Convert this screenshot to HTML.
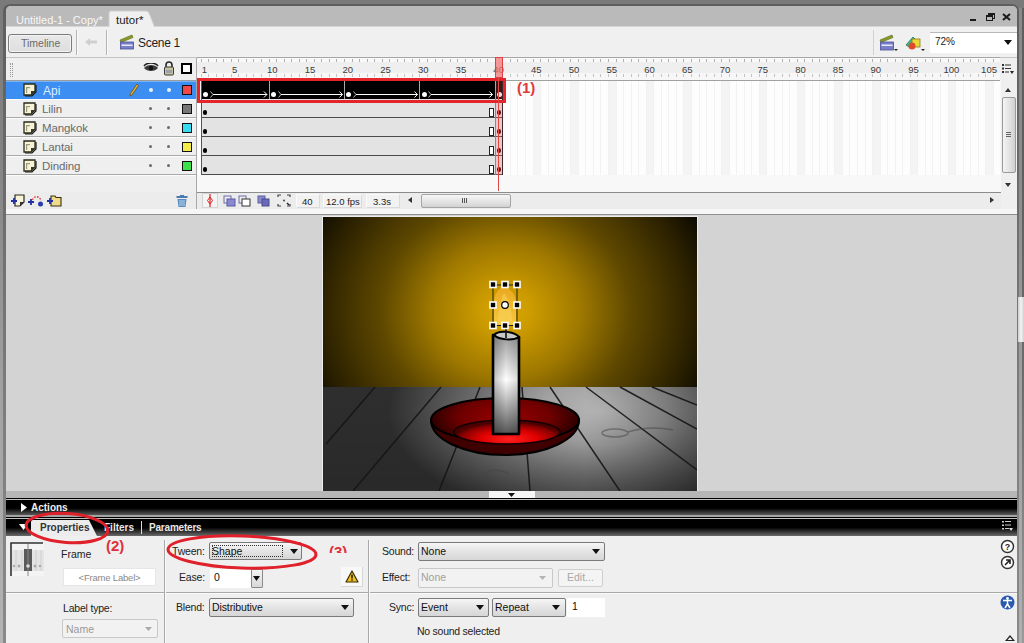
<!DOCTYPE html>
<html><head><meta charset="utf-8">
<style>
*{margin:0;padding:0;box-sizing:border-box}
html,body{width:1024px;height:643px;overflow:hidden;background:linear-gradient(#7a7a7a,#848484 25%,#a2a2a2 62%,#b4b4b4);font-family:"Liberation Sans",sans-serif;font-size:11px;color:#222;position:relative}
.a{position:absolute}
.t{position:absolute;white-space:nowrap;line-height:1}
.num{font-size:9.5px;color:#3a3a3a}
.ln{font-size:11.5px;color:#6a6a6a;letter-spacing:-0.1px}
</style></head><body>
<!-- window frame -->
<div class="a" style="left:3px;top:4px;width:1016px;height:639px;background:linear-gradient(#5e5e5e,#6a6a6a 25%,#7c7c7c 62%,#8a8a8a);border-radius:7px 7px 0 0"></div>
<div class="a" style="left:1019px;top:8px;width:3px;height:635px;background:linear-gradient(#8a8a8a,#8c8c8c 25%,#a0a0a0 62%,#b0b0b0)"></div>
<div class="a" style="left:1022px;top:8px;width:2px;height:635px;background:linear-gradient(#5e5e5e,#5e5e5e 25%,#6e6e6e 62%,#9a9a9a)"></div>
<div class="a" style="left:6px;top:6px;width:1011px;height:637px;background:#efefef;border-radius:5px 5px 0 0;overflow:hidden">
  <div class="a" style="left:0;top:0;width:1011px;height:20px;background:#bababa"></div>
  <div class="a" style="left:0;top:20px;width:1011px;height:1px;background:#d6d6d6"></div>
</div>
<!-- TABS -->
<div class="t" style="left:16px;top:15px;font-size:11px;color:#f8f8f8">Untitled-1 - Copy*</div>
<svg class="a" style="left:108px;top:10px" width="48" height="18"><path d="M1 18V3Q1 1 3 1H38Q40 1 41 3L47 18Z" fill="#f0f0f0" stroke="#cfcfcf" stroke-width="1"/></svg>
<div class="t" style="left:116px;top:15px;font-size:11.5px;color:#1a1a1a">tutor*</div>
<!-- window buttons -->
<div class="a" style="left:970px;top:19px;width:6px;height:2px;background:#1a1a1a"></div>
<div class="a" style="left:988px;top:13px;width:7px;height:6px;border:1px solid #1a1a1a;border-top-width:2px"></div>
<div class="a" style="left:986px;top:15px;width:7px;height:6px;border:1px solid #1a1a1a;border-top-width:2px;background:#bababa"></div>
<svg class="a" style="left:1002px;top:13px" width="9" height="8"><path d="M1 1L8 7M8 1L1 7" stroke="#1a1a1a" stroke-width="2"/></svg>

<!-- TOOLBAR y27-57 -->
<div class="a" style="left:6px;top:27px;width:1011px;height:30px;background:#f0f0f0"></div>
<div class="a" style="left:6px;top:57px;width:1011px;height:1px;background:#c4c4c4"></div>
<div class="a" style="left:8px;top:34px;width:64px;height:19px;border:1.5px solid #7c7c7c;border-radius:3px;background:linear-gradient(#e8e8e8,#dedede);box-shadow:inset 0 0 0 1px #f4f4f4"></div>
<div class="t" style="left:21px;top:38px;font-size:10.5px;color:#6a6a6a">Timeline</div>
<div class="a" style="left:76px;top:30px;width:1px;height:25px;background:#b4b4b4;box-shadow:1px 0 0 #fafafa"></div>
<svg class="a" style="left:84px;top:37px" width="14" height="10"><path d="M1 5L6 1V3.5H13V6.5H6V9Z" fill="#cfcfcf"/></svg>
<div class="a" style="left:106px;top:30px;width:1px;height:25px;background:#b4b4b4;box-shadow:1px 0 0 #fafafa"></div>
<!-- scene icon -->
<svg class="a" style="left:119px;top:34px" width="16" height="16">
 <path d="M1 6L13 1L14 3.5L2 8.5Z" fill="#8a9a2a" stroke="#5d6a10" stroke-width="0.6"/>
 <rect x="1.5" y="8" width="13" height="7" fill="#7a80c8" stroke="#4b4f9a" stroke-width="0.8"/>
 <rect x="2.5" y="10.5" width="11" height="1.5" fill="#e8e8f8"/>
</svg>
<div class="t" style="left:138px;top:37px;font-size:12px;letter-spacing:-0.3px;color:#1e1e1e">Scene 1</div>
<div class="a" style="left:873px;top:30px;width:1px;height:25px;background:#d0d0d0"></div>
<!-- edit scene icon -->
<svg class="a" style="left:879px;top:34px" width="20" height="18">
 <path d="M1 6L13 1L14 3.5L2 8.5Z" fill="#8a9a2a" stroke="#5d6a10" stroke-width="0.6"/>
 <rect x="1.5" y="8" width="13" height="8" fill="#7a80c8" stroke="#4b4f9a" stroke-width="0.8"/>
 <rect x="2.5" y="10.5" width="11" height="1.5" fill="#e8e8f8"/>
 <path d="M15 15h4l-2 2z" fill="#222"/>
</svg>
<svg class="a" style="left:904px;top:34px" width="22" height="18">
 <path d="M2 11L9 3L12 6L5 13Z" fill="#3fb88a" stroke="#1f7a5a" stroke-width="0.8"/>
 <rect x="8" y="5" width="8" height="8" fill="#e8d83a" stroke="#8a7a10" stroke-width="0.8"/>
 <circle cx="8" cy="12" r="3.5" fill="#e04a2a"/>
 <path d="M17 15h4l-2 2z" fill="#222"/>
</svg>
<div class="a" style="left:930px;top:32px;width:87px;height:21px;background:#fff;border-top:1px solid #b8b8b8"></div>
<div class="t" style="left:935px;top:37px;font-size:10px;color:#222">72%</div>
<svg class="a" style="left:1004px;top:40px" width="8" height="5"><path d="M0 0H8L4 5Z" fill="#111"/></svg>


<!-- TIMELINE PANEL y58-214 -->
<div class="a" style="left:6px;top:58px;width:1011px;height:156px;background:#efefef"></div>
<!-- header row -->
<div class="a" style="left:10px;top:63px;width:1px;height:14px;border-left:1px dotted #9a9a9a"></div>
<div class="a" style="left:12px;top:63px;width:1px;height:14px;border-left:1px dotted #9a9a9a"></div>
<!-- eye -->
<svg class="a" style="left:143px;top:63px" width="16" height="11">
 <path d="M1 5C4 1 12 1 15 5C12 9 4 9 1 5Z" fill="#3a3a3a"/>
 <path d="M1 3C4 -1 12 -1 15 3" stroke="#222" stroke-width="1.5" fill="none"/>
 <circle cx="8" cy="5" r="2.2" fill="#111"/>
</svg>
<!-- lock -->
<svg class="a" style="left:163px;top:61px" width="12" height="15">
 <path d="M3 6V4A3 3 0 0 1 9 4V6" stroke="#2a2a2a" stroke-width="1.6" fill="none"/>
 <rect x="1.5" y="6" width="9" height="8" rx="1" fill="#c8c49a" stroke="#3a3a3a" stroke-width="1"/>
 <rect x="3" y="9" width="6" height="3" fill="#9aa0b0"/>
</svg>
<!-- outline square -->
<div class="a" style="left:181px;top:63px;width:11px;height:11px;border:2px solid #000;background:#fff"></div>
<div class="a" style="left:196px;top:58px;width:1px;height:156px;background:#a8a8a8"></div>
<!-- ruler -->
<div class="a" style="left:197px;top:57px;width:803px;height:1px;background:#a6a6a6"></div>
<div class="a" style="left:197px;top:58px;width:803px;height:4px;background:#f8f8f8"></div>
<div class="a" style="left:197px;top:73px;width:803px;height:7px;background:#f7f7f7"></div>
<div class="a" style="left:197px;top:80px;width:803px;height:1px;background:#a0a0a0"></div>
<div class="a" style="left:200.60px;top:59px;width:1px;height:3px;background:#b0b0b0"></div>
<div class="a" style="left:200.60px;top:74px;width:1px;height:3px;background:#c4c4c4"></div>
<div class="a" style="left:208.14px;top:59px;width:1px;height:3px;background:#b0b0b0"></div>
<div class="a" style="left:208.14px;top:74px;width:1px;height:3px;background:#c4c4c4"></div>
<div class="a" style="left:215.69px;top:59px;width:1px;height:3px;background:#b0b0b0"></div>
<div class="a" style="left:215.69px;top:74px;width:1px;height:3px;background:#c4c4c4"></div>
<div class="a" style="left:223.23px;top:59px;width:1px;height:3px;background:#b0b0b0"></div>
<div class="a" style="left:223.23px;top:74px;width:1px;height:3px;background:#c4c4c4"></div>
<div class="a" style="left:230.78px;top:59px;width:1px;height:3px;background:#b0b0b0"></div>
<div class="a" style="left:230.78px;top:74px;width:1px;height:3px;background:#c4c4c4"></div>
<div class="a" style="left:238.32px;top:59px;width:1px;height:3px;background:#b0b0b0"></div>
<div class="a" style="left:238.32px;top:74px;width:1px;height:3px;background:#c4c4c4"></div>
<div class="a" style="left:245.87px;top:59px;width:1px;height:3px;background:#b0b0b0"></div>
<div class="a" style="left:245.87px;top:74px;width:1px;height:3px;background:#c4c4c4"></div>
<div class="a" style="left:253.41px;top:59px;width:1px;height:3px;background:#b0b0b0"></div>
<div class="a" style="left:253.41px;top:74px;width:1px;height:3px;background:#c4c4c4"></div>
<div class="a" style="left:260.96px;top:59px;width:1px;height:3px;background:#b0b0b0"></div>
<div class="a" style="left:260.96px;top:74px;width:1px;height:3px;background:#c4c4c4"></div>
<div class="a" style="left:268.50px;top:59px;width:1px;height:3px;background:#b0b0b0"></div>
<div class="a" style="left:268.50px;top:74px;width:1px;height:3px;background:#c4c4c4"></div>
<div class="a" style="left:276.05px;top:59px;width:1px;height:3px;background:#b0b0b0"></div>
<div class="a" style="left:276.05px;top:74px;width:1px;height:3px;background:#c4c4c4"></div>
<div class="a" style="left:283.60px;top:59px;width:1px;height:3px;background:#b0b0b0"></div>
<div class="a" style="left:283.60px;top:74px;width:1px;height:3px;background:#c4c4c4"></div>
<div class="a" style="left:291.14px;top:59px;width:1px;height:3px;background:#b0b0b0"></div>
<div class="a" style="left:291.14px;top:74px;width:1px;height:3px;background:#c4c4c4"></div>
<div class="a" style="left:298.69px;top:59px;width:1px;height:3px;background:#b0b0b0"></div>
<div class="a" style="left:298.69px;top:74px;width:1px;height:3px;background:#c4c4c4"></div>
<div class="a" style="left:306.23px;top:59px;width:1px;height:3px;background:#b0b0b0"></div>
<div class="a" style="left:306.23px;top:74px;width:1px;height:3px;background:#c4c4c4"></div>
<div class="a" style="left:313.77px;top:59px;width:1px;height:3px;background:#b0b0b0"></div>
<div class="a" style="left:313.77px;top:74px;width:1px;height:3px;background:#c4c4c4"></div>
<div class="a" style="left:321.32px;top:59px;width:1px;height:3px;background:#b0b0b0"></div>
<div class="a" style="left:321.32px;top:74px;width:1px;height:3px;background:#c4c4c4"></div>
<div class="a" style="left:328.87px;top:59px;width:1px;height:3px;background:#b0b0b0"></div>
<div class="a" style="left:328.87px;top:74px;width:1px;height:3px;background:#c4c4c4"></div>
<div class="a" style="left:336.41px;top:59px;width:1px;height:3px;background:#b0b0b0"></div>
<div class="a" style="left:336.41px;top:74px;width:1px;height:3px;background:#c4c4c4"></div>
<div class="a" style="left:343.95px;top:59px;width:1px;height:3px;background:#b0b0b0"></div>
<div class="a" style="left:343.95px;top:74px;width:1px;height:3px;background:#c4c4c4"></div>
<div class="a" style="left:351.50px;top:59px;width:1px;height:3px;background:#b0b0b0"></div>
<div class="a" style="left:351.50px;top:74px;width:1px;height:3px;background:#c4c4c4"></div>
<div class="a" style="left:359.04px;top:59px;width:1px;height:3px;background:#b0b0b0"></div>
<div class="a" style="left:359.04px;top:74px;width:1px;height:3px;background:#c4c4c4"></div>
<div class="a" style="left:366.59px;top:59px;width:1px;height:3px;background:#b0b0b0"></div>
<div class="a" style="left:366.59px;top:74px;width:1px;height:3px;background:#c4c4c4"></div>
<div class="a" style="left:374.13px;top:59px;width:1px;height:3px;background:#b0b0b0"></div>
<div class="a" style="left:374.13px;top:74px;width:1px;height:3px;background:#c4c4c4"></div>
<div class="a" style="left:381.68px;top:59px;width:1px;height:3px;background:#b0b0b0"></div>
<div class="a" style="left:381.68px;top:74px;width:1px;height:3px;background:#c4c4c4"></div>
<div class="a" style="left:389.23px;top:59px;width:1px;height:3px;background:#b0b0b0"></div>
<div class="a" style="left:389.23px;top:74px;width:1px;height:3px;background:#c4c4c4"></div>
<div class="a" style="left:396.77px;top:59px;width:1px;height:3px;background:#b0b0b0"></div>
<div class="a" style="left:396.77px;top:74px;width:1px;height:3px;background:#c4c4c4"></div>
<div class="a" style="left:404.31px;top:59px;width:1px;height:3px;background:#b0b0b0"></div>
<div class="a" style="left:404.31px;top:74px;width:1px;height:3px;background:#c4c4c4"></div>
<div class="a" style="left:411.86px;top:59px;width:1px;height:3px;background:#b0b0b0"></div>
<div class="a" style="left:411.86px;top:74px;width:1px;height:3px;background:#c4c4c4"></div>
<div class="a" style="left:419.40px;top:59px;width:1px;height:3px;background:#b0b0b0"></div>
<div class="a" style="left:419.40px;top:74px;width:1px;height:3px;background:#c4c4c4"></div>
<div class="a" style="left:426.95px;top:59px;width:1px;height:3px;background:#b0b0b0"></div>
<div class="a" style="left:426.95px;top:74px;width:1px;height:3px;background:#c4c4c4"></div>
<div class="a" style="left:434.50px;top:59px;width:1px;height:3px;background:#b0b0b0"></div>
<div class="a" style="left:434.50px;top:74px;width:1px;height:3px;background:#c4c4c4"></div>
<div class="a" style="left:442.04px;top:59px;width:1px;height:3px;background:#b0b0b0"></div>
<div class="a" style="left:442.04px;top:74px;width:1px;height:3px;background:#c4c4c4"></div>
<div class="a" style="left:449.58px;top:59px;width:1px;height:3px;background:#b0b0b0"></div>
<div class="a" style="left:449.58px;top:74px;width:1px;height:3px;background:#c4c4c4"></div>
<div class="a" style="left:457.13px;top:59px;width:1px;height:3px;background:#b0b0b0"></div>
<div class="a" style="left:457.13px;top:74px;width:1px;height:3px;background:#c4c4c4"></div>
<div class="a" style="left:464.67px;top:59px;width:1px;height:3px;background:#b0b0b0"></div>
<div class="a" style="left:464.67px;top:74px;width:1px;height:3px;background:#c4c4c4"></div>
<div class="a" style="left:472.22px;top:59px;width:1px;height:3px;background:#b0b0b0"></div>
<div class="a" style="left:472.22px;top:74px;width:1px;height:3px;background:#c4c4c4"></div>
<div class="a" style="left:479.76px;top:59px;width:1px;height:3px;background:#b0b0b0"></div>
<div class="a" style="left:479.76px;top:74px;width:1px;height:3px;background:#c4c4c4"></div>
<div class="a" style="left:487.31px;top:59px;width:1px;height:3px;background:#b0b0b0"></div>
<div class="a" style="left:487.31px;top:74px;width:1px;height:3px;background:#c4c4c4"></div>
<div class="a" style="left:494.86px;top:59px;width:1px;height:3px;background:#b0b0b0"></div>
<div class="a" style="left:494.86px;top:74px;width:1px;height:3px;background:#c4c4c4"></div>
<div class="a" style="left:502.40px;top:59px;width:1px;height:3px;background:#b0b0b0"></div>
<div class="a" style="left:502.40px;top:74px;width:1px;height:3px;background:#c4c4c4"></div>
<div class="a" style="left:509.94px;top:59px;width:1px;height:3px;background:#b0b0b0"></div>
<div class="a" style="left:509.94px;top:74px;width:1px;height:3px;background:#c4c4c4"></div>
<div class="a" style="left:517.49px;top:59px;width:1px;height:3px;background:#b0b0b0"></div>
<div class="a" style="left:517.49px;top:74px;width:1px;height:3px;background:#c4c4c4"></div>
<div class="a" style="left:525.03px;top:59px;width:1px;height:3px;background:#b0b0b0"></div>
<div class="a" style="left:525.03px;top:74px;width:1px;height:3px;background:#c4c4c4"></div>
<div class="a" style="left:532.58px;top:59px;width:1px;height:3px;background:#b0b0b0"></div>
<div class="a" style="left:532.58px;top:74px;width:1px;height:3px;background:#c4c4c4"></div>
<div class="a" style="left:540.12px;top:59px;width:1px;height:3px;background:#b0b0b0"></div>
<div class="a" style="left:540.12px;top:74px;width:1px;height:3px;background:#c4c4c4"></div>
<div class="a" style="left:547.67px;top:59px;width:1px;height:3px;background:#b0b0b0"></div>
<div class="a" style="left:547.67px;top:74px;width:1px;height:3px;background:#c4c4c4"></div>
<div class="a" style="left:555.22px;top:59px;width:1px;height:3px;background:#b0b0b0"></div>
<div class="a" style="left:555.22px;top:74px;width:1px;height:3px;background:#c4c4c4"></div>
<div class="a" style="left:562.76px;top:59px;width:1px;height:3px;background:#b0b0b0"></div>
<div class="a" style="left:562.76px;top:74px;width:1px;height:3px;background:#c4c4c4"></div>
<div class="a" style="left:570.30px;top:59px;width:1px;height:3px;background:#b0b0b0"></div>
<div class="a" style="left:570.30px;top:74px;width:1px;height:3px;background:#c4c4c4"></div>
<div class="a" style="left:577.85px;top:59px;width:1px;height:3px;background:#b0b0b0"></div>
<div class="a" style="left:577.85px;top:74px;width:1px;height:3px;background:#c4c4c4"></div>
<div class="a" style="left:585.39px;top:59px;width:1px;height:3px;background:#b0b0b0"></div>
<div class="a" style="left:585.39px;top:74px;width:1px;height:3px;background:#c4c4c4"></div>
<div class="a" style="left:592.94px;top:59px;width:1px;height:3px;background:#b0b0b0"></div>
<div class="a" style="left:592.94px;top:74px;width:1px;height:3px;background:#c4c4c4"></div>
<div class="a" style="left:600.49px;top:59px;width:1px;height:3px;background:#b0b0b0"></div>
<div class="a" style="left:600.49px;top:74px;width:1px;height:3px;background:#c4c4c4"></div>
<div class="a" style="left:608.03px;top:59px;width:1px;height:3px;background:#b0b0b0"></div>
<div class="a" style="left:608.03px;top:74px;width:1px;height:3px;background:#c4c4c4"></div>
<div class="a" style="left:615.58px;top:59px;width:1px;height:3px;background:#b0b0b0"></div>
<div class="a" style="left:615.58px;top:74px;width:1px;height:3px;background:#c4c4c4"></div>
<div class="a" style="left:623.12px;top:59px;width:1px;height:3px;background:#b0b0b0"></div>
<div class="a" style="left:623.12px;top:74px;width:1px;height:3px;background:#c4c4c4"></div>
<div class="a" style="left:630.66px;top:59px;width:1px;height:3px;background:#b0b0b0"></div>
<div class="a" style="left:630.66px;top:74px;width:1px;height:3px;background:#c4c4c4"></div>
<div class="a" style="left:638.21px;top:59px;width:1px;height:3px;background:#b0b0b0"></div>
<div class="a" style="left:638.21px;top:74px;width:1px;height:3px;background:#c4c4c4"></div>
<div class="a" style="left:645.75px;top:59px;width:1px;height:3px;background:#b0b0b0"></div>
<div class="a" style="left:645.75px;top:74px;width:1px;height:3px;background:#c4c4c4"></div>
<div class="a" style="left:653.30px;top:59px;width:1px;height:3px;background:#b0b0b0"></div>
<div class="a" style="left:653.30px;top:74px;width:1px;height:3px;background:#c4c4c4"></div>
<div class="a" style="left:660.85px;top:59px;width:1px;height:3px;background:#b0b0b0"></div>
<div class="a" style="left:660.85px;top:74px;width:1px;height:3px;background:#c4c4c4"></div>
<div class="a" style="left:668.39px;top:59px;width:1px;height:3px;background:#b0b0b0"></div>
<div class="a" style="left:668.39px;top:74px;width:1px;height:3px;background:#c4c4c4"></div>
<div class="a" style="left:675.93px;top:59px;width:1px;height:3px;background:#b0b0b0"></div>
<div class="a" style="left:675.93px;top:74px;width:1px;height:3px;background:#c4c4c4"></div>
<div class="a" style="left:683.48px;top:59px;width:1px;height:3px;background:#b0b0b0"></div>
<div class="a" style="left:683.48px;top:74px;width:1px;height:3px;background:#c4c4c4"></div>
<div class="a" style="left:691.02px;top:59px;width:1px;height:3px;background:#b0b0b0"></div>
<div class="a" style="left:691.02px;top:74px;width:1px;height:3px;background:#c4c4c4"></div>
<div class="a" style="left:698.57px;top:59px;width:1px;height:3px;background:#b0b0b0"></div>
<div class="a" style="left:698.57px;top:74px;width:1px;height:3px;background:#c4c4c4"></div>
<div class="a" style="left:706.12px;top:59px;width:1px;height:3px;background:#b0b0b0"></div>
<div class="a" style="left:706.12px;top:74px;width:1px;height:3px;background:#c4c4c4"></div>
<div class="a" style="left:713.66px;top:59px;width:1px;height:3px;background:#b0b0b0"></div>
<div class="a" style="left:713.66px;top:74px;width:1px;height:3px;background:#c4c4c4"></div>
<div class="a" style="left:721.21px;top:59px;width:1px;height:3px;background:#b0b0b0"></div>
<div class="a" style="left:721.21px;top:74px;width:1px;height:3px;background:#c4c4c4"></div>
<div class="a" style="left:728.75px;top:59px;width:1px;height:3px;background:#b0b0b0"></div>
<div class="a" style="left:728.75px;top:74px;width:1px;height:3px;background:#c4c4c4"></div>
<div class="a" style="left:736.30px;top:59px;width:1px;height:3px;background:#b0b0b0"></div>
<div class="a" style="left:736.30px;top:74px;width:1px;height:3px;background:#c4c4c4"></div>
<div class="a" style="left:743.84px;top:59px;width:1px;height:3px;background:#b0b0b0"></div>
<div class="a" style="left:743.84px;top:74px;width:1px;height:3px;background:#c4c4c4"></div>
<div class="a" style="left:751.38px;top:59px;width:1px;height:3px;background:#b0b0b0"></div>
<div class="a" style="left:751.38px;top:74px;width:1px;height:3px;background:#c4c4c4"></div>
<div class="a" style="left:758.93px;top:59px;width:1px;height:3px;background:#b0b0b0"></div>
<div class="a" style="left:758.93px;top:74px;width:1px;height:3px;background:#c4c4c4"></div>
<div class="a" style="left:766.48px;top:59px;width:1px;height:3px;background:#b0b0b0"></div>
<div class="a" style="left:766.48px;top:74px;width:1px;height:3px;background:#c4c4c4"></div>
<div class="a" style="left:774.02px;top:59px;width:1px;height:3px;background:#b0b0b0"></div>
<div class="a" style="left:774.02px;top:74px;width:1px;height:3px;background:#c4c4c4"></div>
<div class="a" style="left:781.57px;top:59px;width:1px;height:3px;background:#b0b0b0"></div>
<div class="a" style="left:781.57px;top:74px;width:1px;height:3px;background:#c4c4c4"></div>
<div class="a" style="left:789.11px;top:59px;width:1px;height:3px;background:#b0b0b0"></div>
<div class="a" style="left:789.11px;top:74px;width:1px;height:3px;background:#c4c4c4"></div>
<div class="a" style="left:796.65px;top:59px;width:1px;height:3px;background:#b0b0b0"></div>
<div class="a" style="left:796.65px;top:74px;width:1px;height:3px;background:#c4c4c4"></div>
<div class="a" style="left:804.20px;top:59px;width:1px;height:3px;background:#b0b0b0"></div>
<div class="a" style="left:804.20px;top:74px;width:1px;height:3px;background:#c4c4c4"></div>
<div class="a" style="left:811.75px;top:59px;width:1px;height:3px;background:#b0b0b0"></div>
<div class="a" style="left:811.75px;top:74px;width:1px;height:3px;background:#c4c4c4"></div>
<div class="a" style="left:819.29px;top:59px;width:1px;height:3px;background:#b0b0b0"></div>
<div class="a" style="left:819.29px;top:74px;width:1px;height:3px;background:#c4c4c4"></div>
<div class="a" style="left:826.84px;top:59px;width:1px;height:3px;background:#b0b0b0"></div>
<div class="a" style="left:826.84px;top:74px;width:1px;height:3px;background:#c4c4c4"></div>
<div class="a" style="left:834.38px;top:59px;width:1px;height:3px;background:#b0b0b0"></div>
<div class="a" style="left:834.38px;top:74px;width:1px;height:3px;background:#c4c4c4"></div>
<div class="a" style="left:841.93px;top:59px;width:1px;height:3px;background:#b0b0b0"></div>
<div class="a" style="left:841.93px;top:74px;width:1px;height:3px;background:#c4c4c4"></div>
<div class="a" style="left:849.47px;top:59px;width:1px;height:3px;background:#b0b0b0"></div>
<div class="a" style="left:849.47px;top:74px;width:1px;height:3px;background:#c4c4c4"></div>
<div class="a" style="left:857.01px;top:59px;width:1px;height:3px;background:#b0b0b0"></div>
<div class="a" style="left:857.01px;top:74px;width:1px;height:3px;background:#c4c4c4"></div>
<div class="a" style="left:864.56px;top:59px;width:1px;height:3px;background:#b0b0b0"></div>
<div class="a" style="left:864.56px;top:74px;width:1px;height:3px;background:#c4c4c4"></div>
<div class="a" style="left:872.11px;top:59px;width:1px;height:3px;background:#b0b0b0"></div>
<div class="a" style="left:872.11px;top:74px;width:1px;height:3px;background:#c4c4c4"></div>
<div class="a" style="left:879.65px;top:59px;width:1px;height:3px;background:#b0b0b0"></div>
<div class="a" style="left:879.65px;top:74px;width:1px;height:3px;background:#c4c4c4"></div>
<div class="a" style="left:887.20px;top:59px;width:1px;height:3px;background:#b0b0b0"></div>
<div class="a" style="left:887.20px;top:74px;width:1px;height:3px;background:#c4c4c4"></div>
<div class="a" style="left:894.74px;top:59px;width:1px;height:3px;background:#b0b0b0"></div>
<div class="a" style="left:894.74px;top:74px;width:1px;height:3px;background:#c4c4c4"></div>
<div class="a" style="left:902.28px;top:59px;width:1px;height:3px;background:#b0b0b0"></div>
<div class="a" style="left:902.28px;top:74px;width:1px;height:3px;background:#c4c4c4"></div>
<div class="a" style="left:909.83px;top:59px;width:1px;height:3px;background:#b0b0b0"></div>
<div class="a" style="left:909.83px;top:74px;width:1px;height:3px;background:#c4c4c4"></div>
<div class="a" style="left:917.38px;top:59px;width:1px;height:3px;background:#b0b0b0"></div>
<div class="a" style="left:917.38px;top:74px;width:1px;height:3px;background:#c4c4c4"></div>
<div class="a" style="left:924.92px;top:59px;width:1px;height:3px;background:#b0b0b0"></div>
<div class="a" style="left:924.92px;top:74px;width:1px;height:3px;background:#c4c4c4"></div>
<div class="a" style="left:932.47px;top:59px;width:1px;height:3px;background:#b0b0b0"></div>
<div class="a" style="left:932.47px;top:74px;width:1px;height:3px;background:#c4c4c4"></div>
<div class="a" style="left:940.01px;top:59px;width:1px;height:3px;background:#b0b0b0"></div>
<div class="a" style="left:940.01px;top:74px;width:1px;height:3px;background:#c4c4c4"></div>
<div class="a" style="left:947.56px;top:59px;width:1px;height:3px;background:#b0b0b0"></div>
<div class="a" style="left:947.56px;top:74px;width:1px;height:3px;background:#c4c4c4"></div>
<div class="a" style="left:955.10px;top:59px;width:1px;height:3px;background:#b0b0b0"></div>
<div class="a" style="left:955.10px;top:74px;width:1px;height:3px;background:#c4c4c4"></div>
<div class="a" style="left:962.64px;top:59px;width:1px;height:3px;background:#b0b0b0"></div>
<div class="a" style="left:962.64px;top:74px;width:1px;height:3px;background:#c4c4c4"></div>
<div class="a" style="left:970.19px;top:59px;width:1px;height:3px;background:#b0b0b0"></div>
<div class="a" style="left:970.19px;top:74px;width:1px;height:3px;background:#c4c4c4"></div>
<div class="a" style="left:977.74px;top:59px;width:1px;height:3px;background:#b0b0b0"></div>
<div class="a" style="left:977.74px;top:74px;width:1px;height:3px;background:#c4c4c4"></div>
<div class="a" style="left:985.28px;top:59px;width:1px;height:3px;background:#b0b0b0"></div>
<div class="a" style="left:985.28px;top:74px;width:1px;height:3px;background:#c4c4c4"></div>
<div class="a" style="left:992.83px;top:59px;width:1px;height:3px;background:#b0b0b0"></div>
<div class="a" style="left:992.83px;top:74px;width:1px;height:3px;background:#c4c4c4"></div>
<div class="t num" style="left:189.37px;top:65px;width:30px;text-align:center">1</div>
<div class="t num" style="left:219.55px;top:65px;width:30px;text-align:center">5</div>
<div class="t num" style="left:257.28px;top:65px;width:30px;text-align:center">10</div>
<div class="t num" style="left:295.00px;top:65px;width:30px;text-align:center">15</div>
<div class="t num" style="left:332.73px;top:65px;width:30px;text-align:center">20</div>
<div class="t num" style="left:370.45px;top:65px;width:30px;text-align:center">25</div>
<div class="t num" style="left:408.18px;top:65px;width:30px;text-align:center">30</div>
<div class="t num" style="left:445.90px;top:65px;width:30px;text-align:center">35</div>
<div class="t num" style="left:483.63px;top:65px;width:30px;text-align:center">40</div>
<div class="t num" style="left:521.35px;top:65px;width:30px;text-align:center">45</div>
<div class="t num" style="left:559.08px;top:65px;width:30px;text-align:center">50</div>
<div class="t num" style="left:596.80px;top:65px;width:30px;text-align:center">55</div>
<div class="t num" style="left:634.53px;top:65px;width:30px;text-align:center">60</div>
<div class="t num" style="left:672.25px;top:65px;width:30px;text-align:center">65</div>
<div class="t num" style="left:709.98px;top:65px;width:30px;text-align:center">70</div>
<div class="t num" style="left:747.70px;top:65px;width:30px;text-align:center">75</div>
<div class="t num" style="left:785.43px;top:65px;width:30px;text-align:center">80</div>
<div class="t num" style="left:823.15px;top:65px;width:30px;text-align:center">85</div>
<div class="t num" style="left:860.88px;top:65px;width:30px;text-align:center">90</div>
<div class="t num" style="left:898.60px;top:65px;width:30px;text-align:center">95</div>
<div class="t num" style="left:936.33px;top:65px;width:30px;text-align:center">100</div>
<div class="t num" style="left:974.05px;top:65px;width:30px;text-align:center">105</div>
<!-- options icon -->
<svg class="a" style="left:1002px;top:64px" width="12" height="10">
 <rect x="0" y="0" width="2" height="2" fill="#333"/><rect x="0" y="3.5" width="2" height="2" fill="#333"/><rect x="0" y="7" width="2" height="2" fill="#333"/>
 <rect x="3" y="0.5" width="6" height="1" fill="#333"/><rect x="3" y="4" width="6" height="1" fill="#333"/><rect x="3" y="7.5" width="4" height="1" fill="#333"/>
 <path d="M8 7H12L10 10Z" fill="#222"/>
</svg>

<!-- layer rows -->
<div class="a" style="left:6px;top:80px;width:190px;height:1px;background:#9a9a9a"></div>
<div class="a" style="left:6px;top:81px;width:190px;height:18px;background:#3c8ef3;border-top:1px solid #78b4f8"></div>
<div class="a" style="left:6px;top:117px;width:190px;height:1px;background:#a9a9a9"></div>
<div class="a" style="left:6px;top:118px;width:190px;height:1px;background:#fcfcfc"></div>
<div class="a" style="left:6px;top:136px;width:190px;height:1px;background:#a9a9a9"></div>
<div class="a" style="left:6px;top:137px;width:190px;height:1px;background:#fcfcfc"></div>
<div class="a" style="left:6px;top:155px;width:190px;height:1px;background:#a9a9a9"></div>
<div class="a" style="left:6px;top:156px;width:190px;height:1px;background:#fcfcfc"></div>
<div class="a" style="left:6px;top:174px;width:190px;height:1px;background:#a9a9a9"></div>
<div class="a" style="left:6px;top:175px;width:190px;height:1px;background:#fcfcfc"></div>
<div class="a" style="left:6px;top:99px;width:190px;height:1px;background:#fcfcfc"></div>

<!-- layer icons -->
<svg width="0" height="0" style="position:absolute"><defs>
 <g id="lic"><path d="M1 1H12V8L8 12H1Z" fill="#f7f3d6" stroke="#2a2a1a" stroke-width="1.3"/><path d="M12 8L8 12V8Z" fill="#3a3a2a"/><path d="M13 2V9L9 13H2" stroke="#1a1a10" stroke-width="1.2" fill="none"/><rect x="3" y="4" width="1.2" height="6" fill="#9a9a80"/><rect x="3" y="4" width="4" height="1.2" fill="#9a9a80"/></g>
 <g id="dot"><circle cx="2" cy="2" r="1.6"/></g>
</defs></svg>
<svg class="a" style="left:23px;top:83px" width="15" height="14"><use href="#lic"/></svg>
<svg class="a" style="left:23px;top:102px" width="15" height="14"><use href="#lic"/></svg>
<svg class="a" style="left:23px;top:121px" width="15" height="14"><use href="#lic"/></svg>
<svg class="a" style="left:23px;top:140px" width="15" height="14"><use href="#lic"/></svg>
<svg class="a" style="left:23px;top:159px" width="15" height="14"><use href="#lic"/></svg>
<div class="t" style="left:43px;top:85px;font-size:12px;color:#dceeff">Api</div>
<div class="t ln" style="left:42px;top:104px">Lilin</div>
<div class="t ln" style="left:42px;top:123px">Mangkok</div>
<div class="t ln" style="left:42px;top:142px">Lantai</div>
<div class="t ln" style="left:42px;top:161px">Dinding</div>
<!-- pencil -->
<svg class="a" style="left:129px;top:83px" width="10" height="14"><path d="M8 1L9.5 2.5L3 12L1 13L1.5 10.5Z" fill="#e8b830" stroke="#6a4a10" stroke-width="0.8"/></svg>
<!-- dots -->
<div class="a" style="left:149px;top:88px;width:4px;height:4px;border-radius:2px;background:#e6f2ff"></div>
<div class="a" style="left:167px;top:88px;width:4px;height:4px;border-radius:2px;background:#e6f2ff"></div>
<div class="a" style="left:149px;top:107px;width:3px;height:3px;border-radius:2px;background:#6a6a6a"></div>
<div class="a" style="left:167px;top:107px;width:3px;height:3px;border-radius:2px;background:#6a6a6a"></div>
<div class="a" style="left:149px;top:126px;width:3px;height:3px;border-radius:2px;background:#6a6a6a"></div>
<div class="a" style="left:167px;top:126px;width:3px;height:3px;border-radius:2px;background:#6a6a6a"></div>
<div class="a" style="left:149px;top:145px;width:3px;height:3px;border-radius:2px;background:#6a6a6a"></div>
<div class="a" style="left:167px;top:145px;width:3px;height:3px;border-radius:2px;background:#6a6a6a"></div>
<div class="a" style="left:149px;top:164px;width:3px;height:3px;border-radius:2px;background:#6a6a6a"></div>
<div class="a" style="left:167px;top:164px;width:3px;height:3px;border-radius:2px;background:#6a6a6a"></div>
<!-- color squares -->
<div class="a" style="left:182px;top:85px;width:10px;height:10px;border:1px solid #111;background:#f04848"></div>
<div class="a" style="left:182px;top:104px;width:10px;height:10px;border:1px solid #111;background:#777"></div>
<div class="a" style="left:182px;top:123px;width:10px;height:10px;border:1px solid #111;background:#38dcf0"></div>
<div class="a" style="left:182px;top:142px;width:10px;height:10px;border:1px solid #111;background:#f4ec48"></div>
<div class="a" style="left:182px;top:161px;width:10px;height:10px;border:1px solid #111;background:#3ce04a"></div>

<!-- frame area background -->
<div class="a" style="left:197px;top:81px;width:804px;height:111px;background:#f8f8f8"></div>
<div class="a" style="left:197px;top:81px;width:803px;height:94px;background:#fdfdfd"></div>
<div class="a" style="left:532.58px;top:81px;width:7.54px;height:94px;background:#f4f4f4"></div>
<div class="a" style="left:570.30px;top:81px;width:7.54px;height:94px;background:#f4f4f4"></div>
<div class="a" style="left:608.03px;top:81px;width:7.54px;height:94px;background:#f4f4f4"></div>
<div class="a" style="left:645.75px;top:81px;width:7.54px;height:94px;background:#f4f4f4"></div>
<div class="a" style="left:683.48px;top:81px;width:7.54px;height:94px;background:#f4f4f4"></div>
<div class="a" style="left:721.21px;top:81px;width:7.54px;height:94px;background:#f4f4f4"></div>
<div class="a" style="left:758.93px;top:81px;width:7.54px;height:94px;background:#f4f4f4"></div>
<div class="a" style="left:796.65px;top:81px;width:7.54px;height:94px;background:#f4f4f4"></div>
<div class="a" style="left:834.38px;top:81px;width:7.54px;height:94px;background:#f4f4f4"></div>
<div class="a" style="left:872.11px;top:81px;width:7.54px;height:94px;background:#f4f4f4"></div>
<div class="a" style="left:909.83px;top:81px;width:7.54px;height:94px;background:#f4f4f4"></div>
<div class="a" style="left:947.56px;top:81px;width:7.54px;height:94px;background:#f4f4f4"></div>
<div class="a" style="left:985.28px;top:81px;width:7.54px;height:94px;background:#f4f4f4"></div>
<div class="a" style="left:502.40px;top:81px;width:1px;height:94px;background:#f2f2f2"></div>
<div class="a" style="left:509.94px;top:81px;width:1px;height:94px;background:#f2f2f2"></div>
<div class="a" style="left:517.49px;top:81px;width:1px;height:94px;background:#f2f2f2"></div>
<div class="a" style="left:525.03px;top:81px;width:1px;height:94px;background:#f2f2f2"></div>
<div class="a" style="left:532.58px;top:81px;width:1px;height:94px;background:#f2f2f2"></div>
<div class="a" style="left:540.12px;top:81px;width:1px;height:94px;background:#f2f2f2"></div>
<div class="a" style="left:547.67px;top:81px;width:1px;height:94px;background:#f2f2f2"></div>
<div class="a" style="left:555.22px;top:81px;width:1px;height:94px;background:#f2f2f2"></div>
<div class="a" style="left:562.76px;top:81px;width:1px;height:94px;background:#f2f2f2"></div>
<div class="a" style="left:570.30px;top:81px;width:1px;height:94px;background:#f2f2f2"></div>
<div class="a" style="left:577.85px;top:81px;width:1px;height:94px;background:#f2f2f2"></div>
<div class="a" style="left:585.39px;top:81px;width:1px;height:94px;background:#f2f2f2"></div>
<div class="a" style="left:592.94px;top:81px;width:1px;height:94px;background:#f2f2f2"></div>
<div class="a" style="left:600.49px;top:81px;width:1px;height:94px;background:#f2f2f2"></div>
<div class="a" style="left:608.03px;top:81px;width:1px;height:94px;background:#f2f2f2"></div>
<div class="a" style="left:615.58px;top:81px;width:1px;height:94px;background:#f2f2f2"></div>
<div class="a" style="left:623.12px;top:81px;width:1px;height:94px;background:#f2f2f2"></div>
<div class="a" style="left:630.66px;top:81px;width:1px;height:94px;background:#f2f2f2"></div>
<div class="a" style="left:638.21px;top:81px;width:1px;height:94px;background:#f2f2f2"></div>
<div class="a" style="left:645.75px;top:81px;width:1px;height:94px;background:#f2f2f2"></div>
<div class="a" style="left:653.30px;top:81px;width:1px;height:94px;background:#f2f2f2"></div>
<div class="a" style="left:660.85px;top:81px;width:1px;height:94px;background:#f2f2f2"></div>
<div class="a" style="left:668.39px;top:81px;width:1px;height:94px;background:#f2f2f2"></div>
<div class="a" style="left:675.93px;top:81px;width:1px;height:94px;background:#f2f2f2"></div>
<div class="a" style="left:683.48px;top:81px;width:1px;height:94px;background:#f2f2f2"></div>
<div class="a" style="left:691.02px;top:81px;width:1px;height:94px;background:#f2f2f2"></div>
<div class="a" style="left:698.57px;top:81px;width:1px;height:94px;background:#f2f2f2"></div>
<div class="a" style="left:706.12px;top:81px;width:1px;height:94px;background:#f2f2f2"></div>
<div class="a" style="left:713.66px;top:81px;width:1px;height:94px;background:#f2f2f2"></div>
<div class="a" style="left:721.21px;top:81px;width:1px;height:94px;background:#f2f2f2"></div>
<div class="a" style="left:728.75px;top:81px;width:1px;height:94px;background:#f2f2f2"></div>
<div class="a" style="left:736.30px;top:81px;width:1px;height:94px;background:#f2f2f2"></div>
<div class="a" style="left:743.84px;top:81px;width:1px;height:94px;background:#f2f2f2"></div>
<div class="a" style="left:751.38px;top:81px;width:1px;height:94px;background:#f2f2f2"></div>
<div class="a" style="left:758.93px;top:81px;width:1px;height:94px;background:#f2f2f2"></div>
<div class="a" style="left:766.48px;top:81px;width:1px;height:94px;background:#f2f2f2"></div>
<div class="a" style="left:774.02px;top:81px;width:1px;height:94px;background:#f2f2f2"></div>
<div class="a" style="left:781.57px;top:81px;width:1px;height:94px;background:#f2f2f2"></div>
<div class="a" style="left:789.11px;top:81px;width:1px;height:94px;background:#f2f2f2"></div>
<div class="a" style="left:796.65px;top:81px;width:1px;height:94px;background:#f2f2f2"></div>
<div class="a" style="left:804.20px;top:81px;width:1px;height:94px;background:#f2f2f2"></div>
<div class="a" style="left:811.75px;top:81px;width:1px;height:94px;background:#f2f2f2"></div>
<div class="a" style="left:819.29px;top:81px;width:1px;height:94px;background:#f2f2f2"></div>
<div class="a" style="left:826.84px;top:81px;width:1px;height:94px;background:#f2f2f2"></div>
<div class="a" style="left:834.38px;top:81px;width:1px;height:94px;background:#f2f2f2"></div>
<div class="a" style="left:841.93px;top:81px;width:1px;height:94px;background:#f2f2f2"></div>
<div class="a" style="left:849.47px;top:81px;width:1px;height:94px;background:#f2f2f2"></div>
<div class="a" style="left:857.01px;top:81px;width:1px;height:94px;background:#f2f2f2"></div>
<div class="a" style="left:864.56px;top:81px;width:1px;height:94px;background:#f2f2f2"></div>
<div class="a" style="left:872.11px;top:81px;width:1px;height:94px;background:#f2f2f2"></div>
<div class="a" style="left:879.65px;top:81px;width:1px;height:94px;background:#f2f2f2"></div>
<div class="a" style="left:887.20px;top:81px;width:1px;height:94px;background:#f2f2f2"></div>
<div class="a" style="left:894.74px;top:81px;width:1px;height:94px;background:#f2f2f2"></div>
<div class="a" style="left:902.28px;top:81px;width:1px;height:94px;background:#f2f2f2"></div>
<div class="a" style="left:909.83px;top:81px;width:1px;height:94px;background:#f2f2f2"></div>
<div class="a" style="left:917.38px;top:81px;width:1px;height:94px;background:#f2f2f2"></div>
<div class="a" style="left:924.92px;top:81px;width:1px;height:94px;background:#f2f2f2"></div>
<div class="a" style="left:932.47px;top:81px;width:1px;height:94px;background:#f2f2f2"></div>
<div class="a" style="left:940.01px;top:81px;width:1px;height:94px;background:#f2f2f2"></div>
<div class="a" style="left:947.56px;top:81px;width:1px;height:94px;background:#f2f2f2"></div>
<div class="a" style="left:955.10px;top:81px;width:1px;height:94px;background:#f2f2f2"></div>
<div class="a" style="left:962.64px;top:81px;width:1px;height:94px;background:#f2f2f2"></div>
<div class="a" style="left:970.19px;top:81px;width:1px;height:94px;background:#f2f2f2"></div>
<div class="a" style="left:977.74px;top:81px;width:1px;height:94px;background:#f2f2f2"></div>
<div class="a" style="left:985.28px;top:81px;width:1px;height:94px;background:#f2f2f2"></div>
<div class="a" style="left:992.83px;top:81px;width:1px;height:94px;background:#f2f2f2"></div>
<div class="a" style="left:201px;top:81px;width:301.40px;height:18px;background:#000"></div>
<div class="a" style="left:201px;top:99px;width:301.40px;height:19px;background:#e3e3e3;border-bottom:1px solid #4a4a4a"></div>
<div class="a" style="left:202.6px;top:110px;width:4.5px;height:4.5px;border-radius:50%;background:#000"></div>
<div class="a" style="left:488.81px;top:108px;width:5px;height:9px;border:1px solid #222;background:#fff"></div>
<div class="a" style="left:496.50px;top:110px;width:4.5px;height:4.5px;border-radius:50%;background:#3a0000"></div>
<div class="a" style="left:201px;top:118px;width:301.40px;height:19px;background:#e3e3e3;border-bottom:1px solid #4a4a4a"></div>
<div class="a" style="left:202.6px;top:129px;width:4.5px;height:4.5px;border-radius:50%;background:#000"></div>
<div class="a" style="left:488.81px;top:127px;width:5px;height:9px;border:1px solid #222;background:#fff"></div>
<div class="a" style="left:496.50px;top:129px;width:4.5px;height:4.5px;border-radius:50%;background:#3a0000"></div>
<div class="a" style="left:201px;top:137px;width:301.40px;height:19px;background:#e3e3e3;border-bottom:1px solid #4a4a4a"></div>
<div class="a" style="left:202.6px;top:148px;width:4.5px;height:4.5px;border-radius:50%;background:#000"></div>
<div class="a" style="left:488.81px;top:146px;width:5px;height:9px;border:1px solid #222;background:#fff"></div>
<div class="a" style="left:496.50px;top:148px;width:4.5px;height:4.5px;border-radius:50%;background:#3a0000"></div>
<div class="a" style="left:201px;top:156px;width:301.40px;height:19px;background:#e3e3e3;border-bottom:1px solid #4a4a4a"></div>
<div class="a" style="left:202.6px;top:167px;width:4.5px;height:4.5px;border-radius:50%;background:#000"></div>
<div class="a" style="left:488.81px;top:165px;width:5px;height:9px;border:1px solid #222;background:#fff"></div>
<div class="a" style="left:496.50px;top:167px;width:4.5px;height:4.5px;border-radius:50%;background:#3a0000"></div>
<div class="a" style="left:201px;top:81px;width:1px;height:94px;background:#555"></div>
<div class="a" style="left:502.40px;top:81px;width:1px;height:94px;background:#111"></div>
<div class="a" style="left:202.80px;top:91.5px;width:5px;height:5px;border-radius:50%;background:#fff"></div>
<svg class="a" style="left:209.60px;top:90px" width="57.91" height="8"><path d="M0.5 1.5L3 4.5L0.5 7.5" stroke="#ccc" stroke-width="0.9" fill="none"/><path d="M3 4.5H56.91" stroke="#fff" stroke-width="1"/><path d="M53.91 1.5L56.91 4.5L53.91 7.5" stroke="#fff" stroke-width="1" fill="none"/></svg>
<div class="a" style="left:268.50px;top:81px;width:1px;height:18px;background:#a8a8a8"></div>
<div class="a" style="left:270.70px;top:91.5px;width:5px;height:5px;border-radius:50%;background:#fff"></div>
<svg class="a" style="left:277.50px;top:90px" width="65.45" height="8"><path d="M0.5 1.5L3 4.5L0.5 7.5" stroke="#ccc" stroke-width="0.9" fill="none"/><path d="M3 4.5H64.45" stroke="#fff" stroke-width="1"/><path d="M61.45 1.5L64.45 4.5L61.45 7.5" stroke="#fff" stroke-width="1" fill="none"/></svg>
<div class="a" style="left:343.95px;top:81px;width:1px;height:18px;background:#a8a8a8"></div>
<div class="a" style="left:346.15px;top:91.5px;width:5px;height:5px;border-radius:50%;background:#fff"></div>
<svg class="a" style="left:352.95px;top:90px" width="65.45" height="8"><path d="M0.5 1.5L3 4.5L0.5 7.5" stroke="#ccc" stroke-width="0.9" fill="none"/><path d="M3 4.5H64.45" stroke="#fff" stroke-width="1"/><path d="M61.45 1.5L64.45 4.5L61.45 7.5" stroke="#fff" stroke-width="1" fill="none"/></svg>
<div class="a" style="left:419.40px;top:81px;width:1px;height:18px;background:#a8a8a8"></div>
<div class="a" style="left:421.60px;top:91.5px;width:5px;height:5px;border-radius:50%;background:#fff"></div>
<svg class="a" style="left:428.40px;top:90px" width="65.45" height="8"><path d="M0.5 1.5L3 4.5L0.5 7.5" stroke="#ccc" stroke-width="0.9" fill="none"/><path d="M3 4.5H64.45" stroke="#fff" stroke-width="1"/><path d="M61.45 1.5L64.45 4.5L61.45 7.5" stroke="#fff" stroke-width="1" fill="none"/></svg>
<div class="a" style="left:494.86px;top:81px;width:1px;height:18px;background:#a8a8a8"></div>
<div class="a" style="left:497.06px;top:91.5px;width:5px;height:5px;border-radius:50%;background:#fff"></div>
<div class="a" style="left:495px;top:99px;width:1px;height:76px;background:#8a8a8a"></div>
<div class="a" style="left:496px;top:81px;width:6.5px;height:94px;background:rgba(255,110,110,0.22)"></div>
<!-- red annotation (1) -->
<div class="a" style="left:197px;top:78px;width:309px;height:25px;border:3px solid #e4262c"></div>
<div class="t" style="left:517px;top:80px;font-size:15px;font-weight:bold;color:#e03a3a">(1)</div>
<!-- playhead -->
<div class="a" style="left:495px;top:57px;width:8px;height:21px;background:rgba(240,120,120,0.75);border:1px solid #e04040"></div>
<div class="a" style="left:498px;top:78px;width:1px;height:113px;background:#e04848"></div>
<!-- vertical scrollbar -->
<svg class="a" style="left:1005px;top:88px" width="6" height="4"><path d="M0 4L3 0L6 4Z" fill="#333"/></svg>
<div class="a" style="left:1002px;top:97px;width:14px;height:76px;border:1px solid #9a9a9a;border-radius:2px;background:linear-gradient(90deg,#f4f4f4,#e0e0e0 60%,#cfcfcf)"></div>
<div class="a" style="left:1006px;top:132px;width:5px;height:1px;background:#666;box-shadow:0 2px 0 #666,0 4px 0 #666"></div>
<svg class="a" style="left:1005px;top:183px" width="6" height="4"><path d="M0 0L3 4L6 0Z" fill="#333"/></svg>
<!-- footer -->
<div class="a" style="left:197px;top:192px;width:804px;height:1px;background:#8c8c8c"></div>
<div class="a" style="left:6px;top:192px;width:190px;height:17px;background:#ececec"></div>
<div class="a" style="left:197px;top:193px;width:804px;height:16px;background:#ececec"></div>
<div class="a" style="left:6px;top:209px;width:1011px;height:5px;background:#f6f6f6"></div>
<div class="a" style="left:6px;top:214px;width:1011px;height:1px;background:#8e8e8e"></div>
<!-- footer layer icons -->
<svg class="a" style="left:10px;top:194px" width="16" height="13"><path d="M5 1H14V8L10 12H5Z" fill="#f7f3d6" stroke="#2a2a1a" stroke-width="1.2"/><path d="M14 8L10 12V8Z" fill="#333"/><path d="M1 7H7M4 4V10" stroke="#2030a0" stroke-width="1.8"/></svg>
<svg class="a" style="left:28px;top:193px" width="16" height="14"><path d="M4 10C4 2 12 2 13 8" stroke="#e02020" stroke-width="1.3" stroke-dasharray="1.5 1.5" fill="none"/><path d="M0 9H6M3 6V12" stroke="#2030a0" stroke-width="1.8"/><circle cx="12.5" cy="11" r="2.5" fill="#2a3ab0"/></svg>
<svg class="a" style="left:46px;top:193px" width="16" height="14"><path d="M5 3H9L10 4.5H15V13H5Z" fill="#f0dc88" stroke="#3a3010" stroke-width="1.1"/><path d="M1 8H7M4 5V11" stroke="#2030a0" stroke-width="1.8"/></svg>
<svg class="a" style="left:176px;top:195px" width="12" height="12"><rect x="0.5" y="1" width="11" height="2" fill="#4a7ab0"/><rect x="4" y="0" width="4" height="1.5" fill="#4a7ab0"/><path d="M1.5 4H10.5L9.5 12H2.5Z" fill="#5a8ac0"/><path d="M4 5V11M6 5V11M8 5V11" stroke="#d8e8f8" stroke-width="0.8"/></svg>
<!-- footer timeline controls -->
<div class="a" style="left:202px;top:193px;width:16px;height:15px;border:1px solid #d4d4d4;background:#f4f4f4"></div>
<svg class="a" style="left:206px;top:194px" width="8" height="13"><path d="M4 0V13" stroke="#e02020" stroke-width="1.2"/><path d="M4 3L6.5 6.5L4 10L1.5 6.5Z" fill="none" stroke="#e02020" stroke-width="1"/></svg>
<svg class="a" style="left:223px;top:195px" width="14" height="12"><rect x="1" y="1" width="7" height="7" fill="none" stroke="#6a6aa8" stroke-width="1"/><rect x="4" y="4" width="8" height="7" fill="#8a8ad0" stroke="#5a5aa0" stroke-width="1"/></svg>
<svg class="a" style="left:238px;top:195px" width="14" height="12"><rect x="1" y="1" width="7" height="7" fill="none" stroke="#6a6aa8" stroke-width="1"/><rect x="4" y="4" width="8" height="7" fill="#fff" stroke="#333" stroke-width="1"/></svg>
<svg class="a" style="left:257px;top:195px" width="14" height="12"><rect x="1" y="1" width="7" height="7" fill="#8a8ad0" stroke="#5a5aa0" stroke-width="1"/><rect x="5" y="4" width="7" height="7" fill="#6a6ab8" stroke="#4a4a90" stroke-width="1"/></svg>
<svg class="a" style="left:277px;top:194px" width="14" height="13"><path d="M1 3V1H4M10 1H13V3M13 10V12H10M4 12H1V10" stroke="#444" stroke-width="1.2" fill="none"/><circle cx="7" cy="6.5" r="1" fill="#444"/><path d="M10 9L12 11" stroke="#222" stroke-width="1.5"/></svg>
<div class="a" style="left:296px;top:194px;width:24px;height:14px;background:#f2f2f2;border:1px solid #dadada;border-left-color:#fafafa;border-top-color:#fafafa"></div>
<div class="t" style="left:302px;top:197px;font-size:9.5px;color:#222">40</div>
<div class="a" style="left:323px;top:194px;width:39px;height:14px;background:#f2f2f2;border:1px solid #dadada;border-left-color:#fafafa;border-top-color:#fafafa"></div>
<div class="t" style="left:326px;top:197px;font-size:9.5px;color:#222">12.0 fps</div>
<div class="a" style="left:366px;top:194px;width:34px;height:14px;background:#f2f2f2;border:1px solid #dadada;border-left-color:#fafafa;border-top-color:#fafafa"></div>
<div class="t" style="left:373px;top:197px;font-size:9.5px;color:#222">3.3s</div>
<svg class="a" style="left:408px;top:197px" width="4" height="6"><path d="M4 0V6L0 3Z" fill="#333"/></svg>
<div class="a" style="left:421px;top:194px;width:90px;height:14px;border:1px solid #a4a4a4;border-radius:2px;background:linear-gradient(#f6f6f6,#e2e2e2 60%,#d2d2d2)"></div>
<div class="a" style="left:462px;top:198px;width:1px;height:5px;background:#555;box-shadow:2px 0 0 #555,4px 0 0 #555"></div>
<svg class="a" style="left:990px;top:197px" width="4" height="6"><path d="M0 0V6L4 3Z" fill="#333"/></svg>
<!-- STAGE -->
<div class="a" style="left:6px;top:215px;width:1011px;height:276px;background:#d3d3d3"></div>
<div class="a" style="left:322px;top:216px;width:376px;height:275px;background:#ededed"></div>
<svg class="a" style="left:323px;top:217px" width="374" height="274" viewBox="0 0 374 274">
 <defs>
  <radialGradient id="bg" cx="183" cy="94" r="250" gradientUnits="userSpaceOnUse" gradientTransform="translate(183 94) scale(1 0.88) translate(-183 -94)">
   <stop offset="0" stop-color="#dcaa00"/>
   <stop offset="0.12" stop-color="#c89800"/>
   <stop offset="0.3" stop-color="#9e7800"/>
   <stop offset="0.5" stop-color="#5e4800"/>
   <stop offset="0.75" stop-color="#2a2000"/>
   <stop offset="0.88" stop-color="#0a0800"/>
   <stop offset="1" stop-color="#000"/>
  </radialGradient>
  <radialGradient id="fl" cx="280" cy="195" r="215" gradientUnits="userSpaceOnUse" gradientTransform="translate(280 195) scale(1 0.5) translate(-280 -195)">
   <stop offset="0" stop-color="#bcbcbc"/>
   <stop offset="0.3" stop-color="#a2a2a2"/>
   <stop offset="0.6" stop-color="#6e6e6e"/>
   <stop offset="0.85" stop-color="#464646"/>
   <stop offset="1" stop-color="#2e2e2e"/>
  </radialGradient>
  <linearGradient id="cd" x1="0" y1="0" x2="0" y2="1">
   <stop offset="0" stop-color="#9a9a9a"/>
   <stop offset="0.45" stop-color="#ffffff"/>
   <stop offset="1" stop-color="#555"/>
  </linearGradient>
  <linearGradient id="cdh" x1="0" y1="0" x2="1" y2="0">
   <stop offset="0" stop-color="#000" stop-opacity="0.25"/>
   <stop offset="0.5" stop-color="#000" stop-opacity="0"/>
   <stop offset="1" stop-color="#000" stop-opacity="0.15"/>
  </linearGradient>
  <radialGradient id="dish" cx="182" cy="200" r="76" gradientUnits="userSpaceOnUse" gradientTransform="translate(182 200) scale(1 0.4) translate(-182 -200)">
   <stop offset="0" stop-color="#9a0000"/>
   <stop offset="0.6" stop-color="#6e0000"/>
   <stop offset="1" stop-color="#2a0000"/>
  </radialGradient>
  <radialGradient id="dish2" cx="186" cy="222" r="56" gradientUnits="userSpaceOnUse" gradientTransform="translate(186 222) scale(1 0.3) translate(-186 -222)">
   <stop offset="0" stop-color="#ff2020"/>
   <stop offset="0.5" stop-color="#e00000"/>
   <stop offset="0.85" stop-color="#8a0000"/>
   <stop offset="1" stop-color="#4a0000"/>
  </radialGradient>
  <linearGradient id="fla" x1="0" y1="0" x2="0" y2="1">
   <stop offset="0" stop-color="#eaa820"/>
   <stop offset="1" stop-color="#f6c83a"/>
  </linearGradient>
  <linearGradient id="flv" x1="0" y1="0" x2="0" y2="1">
   <stop offset="0" stop-color="#000" stop-opacity="0"/>
   <stop offset="0.5" stop-color="#000" stop-opacity="0.05"/>
   <stop offset="1" stop-color="#000" stop-opacity="0.12"/>
  </linearGradient>
  <linearGradient id="flh" x1="0" y1="0" x2="1" y2="0">
   <stop offset="0.7" stop-color="#000" stop-opacity="0"/>
   <stop offset="1" stop-color="#000" stop-opacity="0.3"/>
  </linearGradient>
 </defs>
 <rect width="374" height="170" fill="url(#bg)"/>
 <rect y="170" width="374" height="104" fill="url(#fl)"/>
 <rect y="170" width="374" height="104" fill="url(#flv)"/>
 <rect y="170" width="374" height="104" fill="url(#flh)"/>
 <!-- planks -->
 <g stroke="#151515" stroke-width="1.5" fill="none" opacity="0.9">
  <path d="M52 170L3 227"/>
  <path d="M118 170L30 274"/>
  <path d="M157 170L116 274"/>
  <path d="M199 170L207 274"/>
  <path d="M227 170L297 274"/>
  <path d="M263 170L374 253"/>
  <path d="M297 170L374 212"/>
  <path d="M329 170L374 188"/>
 </g>
 <g fill="none" stroke="#444" stroke-width="1.5" opacity="0.5">
  <ellipse cx="292" cy="216" rx="13" ry="4"/>
  <path d="M305 215C318 211 335 210 350 213"/>
  <path d="M160 257C168 252 178 252 186 257"/>
 </g>
 <!-- dish -->
 <path d="M108 203A74 35 0 0 0 256 203Z" fill="#3e0000" stroke="#000" stroke-width="2"/>
 <ellipse cx="182" cy="203" rx="74" ry="22" fill="url(#dish)" stroke="#000" stroke-width="2"/>
 <ellipse cx="184" cy="215" rx="53" ry="12" fill="url(#dish2)" stroke="#140000" stroke-width="1.6"/>
 <!-- candle -->
 <path d="M170 118L170 217L196 217L196 120Z" fill="url(#cd)" stroke="#000" stroke-width="2.6" stroke-linejoin="round"/>
 <path d="M170 118L170 217L196 217L196 120Z" fill="url(#cdh)"/>
 <path d="M171 118C176 112 192 115 196 120C190 124 176 123 171 118Z" fill="#c8c8c8" stroke="#000" stroke-width="2"/>
 <path d="M183 108V121" stroke="#111" stroke-width="1.6"/>
 <!-- flame -->
 <path d="M171 108V86C171 77 176 70 182 70C188 72 193 78 193 86V108Z" fill="url(#fla)"/>
 <path d="M175 106C175 96 177 84 181 76C186 82 189 94 189 106Z" fill="#f8d460" opacity="0.55"/>
 <!-- selection -->
 <rect x="170" y="68" width="24" height="40.5" fill="none" stroke="#222" stroke-width="1"/>
 <g fill="#000" stroke="#fff" stroke-width="1.6">
  <rect x="167" y="64.5" width="6" height="6"/><rect x="179" y="64.5" width="6" height="6"/><rect x="191" y="64.5" width="6" height="6"/>
  <rect x="167" y="85" width="6" height="6"/><rect x="191" y="85" width="6" height="6"/>
  <rect x="167" y="105.5" width="6" height="6"/><rect x="179" y="105.5" width="6" height="6"/><rect x="191" y="105.5" width="6" height="6"/>
 </g>
 <circle cx="182" cy="88" r="3.3" fill="#fff" stroke="#000" stroke-width="1.2"/>
</svg>
<!-- bottom band -->
<div class="a" style="left:6px;top:491px;width:1011px;height:7px;background:#b6b6b6"></div>
<div class="a" style="left:489px;top:491px;width:46px;height:7px;background:#f6f6f6"></div>
<svg class="a" style="left:508px;top:493px" width="7" height="4"><path d="M0 0H7L3.5 4Z" fill="#111"/></svg>
<!-- right splitter handle -->
<div class="a" style="left:1018px;top:297px;width:6px;height:45px;background:linear-gradient(90deg,#cfcfcf,#f4f4f4 50%,#cfcfcf)"></div>
<!-- PROPERTIES -->
<div class="a" style="left:6px;top:498px;width:1011px;height:1px;background:#000"></div>
<div class="a" style="left:6px;top:499px;width:1011px;height:1px;background:#c4c4c4"></div>
<div class="a" style="left:6px;top:500px;width:1011px;height:15px;background:linear-gradient(#000 0,#000 55%,#5a5a5a 100%)"></div>
<div class="a" style="left:6px;top:515px;width:1011px;height:2px;background:#a4a4a4"></div>
<div class="a" style="left:6px;top:517px;width:1011px;height:1px;background:#000"></div>
<div class="a" style="left:6px;top:518px;width:1011px;height:1px;background:#c0c0c0"></div>
<div class="a" style="left:6px;top:519px;width:1011px;height:17px;background:linear-gradient(#000 0,#000 50%,#6a6a6a 100%)"></div>
<div class="a" style="left:6px;top:536px;width:1011px;height:107px;background:#efefef"></div>
<svg class="a" style="left:21px;top:503px" width="6" height="9"><path d="M0 0L6 4.5L0 9Z" fill="#fff"/></svg>
<div class="t" style="left:31px;top:503px;font-size:10px;font-weight:bold;color:#f0f0f0">Actions</div>
<svg class="a" style="left:19px;top:524px" width="9" height="6"><path d="M0 0H9L4.5 6Z" fill="#fff"/></svg>
<svg class="a" style="left:31px;top:519px" width="70" height="17"><path d="M0 17V3Q0 1 2 1H58L66 17Z" fill="#ececec"/></svg>
<div class="t" style="left:40px;top:523px;font-size:10px;font-weight:bold;color:#333">Properties</div>
<div class="t" style="left:104px;top:523px;font-size:10px;font-weight:bold;color:#e8e8e8">Filters</div>
<div class="a" style="left:141px;top:521px;width:1px;height:13px;background:#ddd"></div>
<div class="t" style="left:149px;top:523px;font-size:10px;font-weight:bold;color:#e8e8e8;letter-spacing:-0.2px">Parameters</div>
<svg class="a" style="left:1002px;top:521px" width="11" height="10"><g fill="#ccc"><rect x="0" y="0" width="2" height="1.5"/><rect x="0" y="3.5" width="2" height="1.5"/><rect x="0" y="7" width="2" height="1.5"/><rect x="3" y="0" width="6" height="1"/><rect x="3" y="3.5" width="6" height="1"/><rect x="3" y="7" width="4" height="1"/></g><path d="M7 7H11L9 10Z" fill="#ddd"/></svg>

<!-- frame icon -->
<svg class="a" style="left:10px;top:542px" width="35" height="35">
 <rect x="1" y="1" width="33" height="33" fill="#f4f4f4"/>
 <path d="M1 34V1H33" stroke="#333" stroke-width="1.6" fill="none"/>
 <rect x="2" y="8" width="32" height="21" fill="#e4e4e4"/>
 <path d="M6 8V29M12 8V29M20 8V29M26 8V29M31 8V29" stroke="#d0d0d0" stroke-width="1"/>
 <rect x="14" y="7" width="8" height="22" fill="#5a5a5a"/>
 <path d="M18 2V34" stroke="#888" stroke-width="1"/>
 <circle cx="9" cy="24" r="1.5" fill="#aaa"/><circle cx="18" cy="24" r="1.8" fill="#ddd"/><circle cx="25" cy="24" r="1.5" fill="#aaa"/><circle cx="30" cy="24" r="1.2" fill="#aaa"/><circle cx="4" cy="24" r="1.2" fill="#aaa"/>
</svg>
<div class="t" style="left:61px;top:549px;font-size:10.5px;color:#222">Frame</div>
<div class="a" style="left:63px;top:568px;width:93px;height:18px;background:#fff;border:1px solid #e6e6e6"></div>
<div class="t" style="left:63px;top:573px;width:93px;text-align:center;font-size:9.5px;color:#8a8a8a;letter-spacing:-0.2px">&lt;Frame Label&gt;</div>
<div class="a" style="left:6px;top:592px;width:1011px;height:1px;background:#a8a8a8"></div>
<div class="a" style="left:6px;top:593px;width:1011px;height:1px;background:#fafafa"></div>
<div class="a" style="left:164px;top:540px;width:1px;height:103px;background:#a8a8a8"></div>
<div class="a" style="left:165px;top:540px;width:1px;height:103px;background:#fafafa"></div>
<div class="a" style="left:368px;top:540px;width:1px;height:103px;background:#a8a8a8"></div>
<div class="a" style="left:369px;top:540px;width:1px;height:103px;background:#fafafa"></div>
<div class="t" style="left:63px;top:603px;font-size:10.5px;color:#222;letter-spacing:-0.2px">Label type:</div>
<div class="a" style="left:62px;top:619px;width:96px;height:19px;border:1px solid #c8c8c8;border-radius:2px;background:#f2f2f2"></div>
<div class="t" style="left:66px;top:624px;font-size:10.5px;color:#9a9a9a">Name</div>
<svg class="a" style="left:145px;top:627px" width="7" height="4"><path d="M0 0H7L3.5 4Z" fill="#aaa"/></svg>

<!-- tween -->
<div class="t" style="left:172px;top:546px;font-size:10.5px;color:#222;letter-spacing:-0.2px">Tween:</div>
<div class="a" style="left:209px;top:542px;width:93px;height:18px;border:1px solid #7a7a7a;border-radius:2px;background:linear-gradient(#f6f6f6,#e4e4e4 50%,#d6d6d6)"></div>
<div class="a" style="left:212px;top:545px;width:71px;height:12px;border:1px dotted #333"></div>
<div class="t" style="left:212px;top:546px;font-size:10.5px;color:#111">Shape</div>
<svg class="a" style="left:290px;top:549px" width="8" height="5"><path d="M0 0H8L4 5Z" fill="#111"/></svg>
<div class="t" style="left:179px;top:572px;font-size:10.5px;color:#222;letter-spacing:-0.2px">Ease:</div>
<div class="a" style="left:210px;top:569px;width:41px;height:19px;background:#fff"></div>
<div class="t" style="left:214px;top:572px;font-size:10.5px;color:#111">0</div>
<div class="a" style="left:251px;top:569px;width:12px;height:19px;border:1px solid #8a8a8a;border-radius:1px;background:linear-gradient(#f4f4f4,#d8d8d8)"></div>
<svg class="a" style="left:253px;top:576px" width="7" height="5"><path d="M0 0H7L3.5 5Z" fill="#111"/></svg>
<div class="a" style="left:341px;top:567px;width:22px;height:20px;background:#f8f8f8;border-right:1px solid #d6d6d6;border-bottom:1px solid #d6d6d6"></div>
<svg class="a" style="left:345px;top:570px" width="14" height="13"><path d="M7 1L13 12H1Z" fill="#f0c020" stroke="#3a2a00" stroke-width="1.2" stroke-linejoin="round"/><rect x="6.3" y="4.5" width="1.4" height="4" fill="#111"/><rect x="6.3" y="9.3" width="1.4" height="1.4" fill="#111"/></svg>
<div class="t" style="left:176px;top:602px;font-size:10.5px;color:#222;letter-spacing:-0.2px">Blend:</div>
<div class="a" style="left:209px;top:598px;width:145px;height:19px;border:1px solid #7a7a7a;border-radius:2px;background:linear-gradient(#f6f6f6,#e4e4e4 50%,#d6d6d6)"></div>
<div class="t" style="left:212px;top:602px;font-size:10.5px;color:#111;letter-spacing:-0.1px">Distributive</div>
<svg class="a" style="left:341px;top:605px" width="8" height="5"><path d="M0 0H8L4 5Z" fill="#111"/></svg>

<!-- sound -->
<div class="t" style="left:382px;top:546px;font-size:10.5px;color:#222;letter-spacing:-0.2px">Sound:</div>
<div class="a" style="left:418px;top:542px;width:187px;height:19px;border:1px solid #7a7a7a;border-radius:2px;background:linear-gradient(#f6f6f6,#e4e4e4 50%,#d6d6d6)"></div>
<div class="t" style="left:421px;top:546px;font-size:10.5px;color:#111">None</div>
<svg class="a" style="left:592px;top:549px" width="8" height="5"><path d="M0 0H8L4 5Z" fill="#111"/></svg>
<div class="t" style="left:382px;top:572px;font-size:10.5px;color:#222;letter-spacing:-0.2px">Effect:</div>
<div class="a" style="left:418px;top:568px;width:135px;height:20px;border:1px solid #c8c8c8;border-radius:2px;background:#f2f2f2"></div>
<div class="t" style="left:421px;top:572px;font-size:10.5px;color:#a0a0a0">None</div>
<svg class="a" style="left:539px;top:576px" width="7" height="4"><path d="M0 0H7L3.5 4Z" fill="#b4b4b4"/></svg>
<div class="a" style="left:558px;top:569px;width:45px;height:18px;border:1px solid #cfcfcf;border-radius:2px;background:#f4f4f4"></div>
<div class="t" style="left:567px;top:572px;font-size:10.5px;color:#a8a8a8">Edit...</div>
<div class="t" style="left:389px;top:602px;font-size:10.5px;color:#222;letter-spacing:-0.2px">Sync:</div>
<div class="a" style="left:418px;top:598px;width:71px;height:19px;border:1px solid #7a7a7a;border-radius:2px;background:linear-gradient(#f6f6f6,#e4e4e4 50%,#d6d6d6)"></div>
<div class="t" style="left:421px;top:602px;font-size:10.5px;color:#111">Event</div>
<svg class="a" style="left:476px;top:605px" width="8" height="5"><path d="M0 0H8L4 5Z" fill="#111"/></svg>
<div class="a" style="left:492px;top:598px;width:74px;height:19px;border:1px solid #7a7a7a;border-radius:2px;background:linear-gradient(#f6f6f6,#e4e4e4 50%,#d6d6d6)"></div>
<div class="t" style="left:495px;top:602px;font-size:10.5px;color:#111">Repeat</div>
<svg class="a" style="left:552px;top:605px" width="8" height="5"><path d="M0 0H8L4 5Z" fill="#111"/></svg>
<div class="a" style="left:567px;top:598px;width:38px;height:19px;background:#fff"></div>
<div class="t" style="left:572px;top:601px;font-size:10.5px;color:#111">1</div>
<div class="t" style="left:417px;top:626px;font-size:10.5px;color:#222;letter-spacing:-0.25px">No sound selected</div>

<!-- right icons -->
<svg class="a" style="left:1000px;top:539px" width="15" height="15"><circle cx="7.5" cy="7.5" r="6" fill="#fff" stroke="#333" stroke-width="1.5"/><text x="7.5" y="11" font-size="9" font-weight="bold" text-anchor="middle" fill="#222" font-family="Liberation Sans">?</text></svg>
<svg class="a" style="left:1000px;top:555px" width="15" height="15"><circle cx="7.5" cy="7.5" r="6" fill="#fff" stroke="#333" stroke-width="1.5"/><path d="M5 10L10 5M6 5H10V9" stroke="#222" stroke-width="1.6" fill="none"/></svg>
<svg class="a" style="left:1000px;top:595px" width="15" height="15"><circle cx="7.5" cy="7.5" r="7" fill="#2a5ab0"/><circle cx="7.5" cy="3.5" r="1.4" fill="#fff"/><path d="M3 5.5H12M7.5 5.5V9M7.5 9L5 13M7.5 9L10 13" stroke="#fff" stroke-width="1.5" fill="none"/></svg>
<svg class="a" style="left:1005px;top:635px" width="10" height="6"><path d="M0 6L5 0L10 6Z" fill="#222"/><path d="M2.5 5L5 2L7.5 5Z" fill="#efefef"/></svg>

<!-- red annotations -->
<svg class="a" style="left:20px;top:508px" width="92" height="40"><ellipse cx="47" cy="20" rx="41" ry="14.5" fill="none" stroke="#e0202a" stroke-width="3" transform="rotate(4 47 20)"/></svg>
<div class="t" style="left:106px;top:538px;font-size:15px;font-weight:bold;color:#e0303a">(2)</div>
<svg class="a" style="left:163px;top:531px" width="160" height="42"><ellipse cx="79" cy="21" rx="74" ry="16" fill="none" stroke="#e0202a" stroke-width="3" transform="rotate(2 79 21)"/></svg>
<div class="a" style="left:329px;top:545px;width:22px;height:8px;overflow:hidden"><div class="t" style="left:0;top:-1px;font-size:15px;font-weight:bold;color:#e0303a">(3)</div></div>
</body></html>
